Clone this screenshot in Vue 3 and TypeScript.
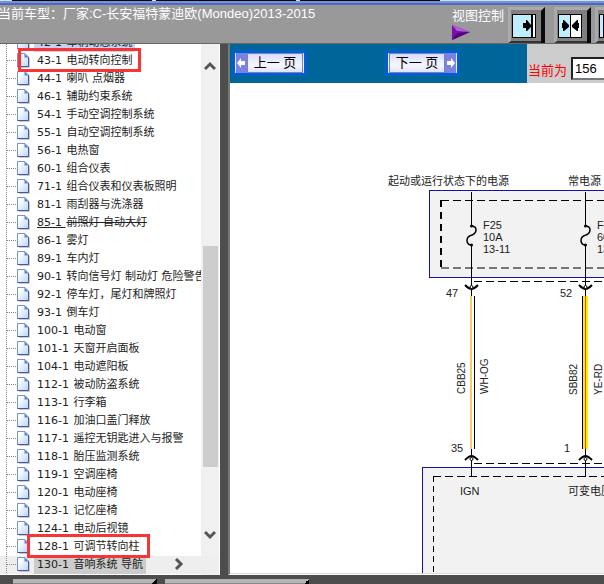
<script setup lang="ts">
import { ref } from 'vue'

interface TreeItem {
  code: string
  name: string
  state?: 'past' | 'marked' | 'struck' | 'current'
}

const items: TreeItem[] = [
  { code: '42-1', name: '车辆动态系统', state: 'past' },
  { code: '43-1', name: '电动转向控制', state: 'marked' },
  { code: '44-1', name: '喇叭 点烟器' },
  { code: '46-1', name: '辅助约束系统' },
  { code: '54-1', name: '手动空调控制系统' },
  { code: '55-1', name: '自动空调控制系统' },
  { code: '56-1', name: '电热窗' },
  { code: '60-1', name: '组合仪表' },
  { code: '71-1', name: '组合仪表和仪表板照明' },
  { code: '81-1', name: '雨刮器与洗涤器' },
  { code: '85-1', name: '前照灯 自动大灯', state: 'struck' },
  { code: '86-1', name: '雾灯' },
  { code: '89-1', name: '车内灯' },
  { code: '90-1', name: '转向信号灯 制动灯 危险警告灯' },
  { code: '92-1', name: '停车灯，尾灯和牌照灯' },
  { code: '93-1', name: '倒车灯' },
  { code: '100-1', name: '电动窗' },
  { code: '101-1', name: '天窗开启面板' },
  { code: '104-1', name: '电动遮阳板' },
  { code: '112-1', name: '被动防盗系统' },
  { code: '113-1', name: '行李箱' },
  { code: '116-1', name: '加油口盖门释放' },
  { code: '117-1', name: '遥控无钥匙进入与报警' },
  { code: '118-1', name: '胎压监测系统' },
  { code: '119-1', name: '空调座椅' },
  { code: '120-1', name: '电动座椅' },
  { code: '123-1', name: '记忆座椅' },
  { code: '124-1', name: '电动后视镜' },
  { code: '128-1', name: '可调节转向柱', state: 'marked' },
  { code: '130-1', name: '音响系统 导航', state: 'current' },
]

const page = ref('156')

// Horizontal positions of the two fused supply wires
const fuses = [
  { x: 471, lines: ['F25', '10A', '13-11'] },
  { x: 585, lines: ['F42', '60A', '13-11'] },
]
</script>

<template>
  <div class="app">
    <div class="strip"><i></i><i></i><i></i></div>
    <header class="header">
      <h1 class="title">当前车型：厂家:C-长安福特蒙迪欧(Mondeo)2013-2015</h1>
      <div class="views">
        <div class="view-label">
          <span>视图控制</span>
          <svg width="19" height="16" viewBox="0 0 19 16" aria-hidden="true">
            <path d="M0 0L18 7L0 15Z" fill="#7a10a8" />
            <path d="M0 0L18 7L5 6Z" fill="#b45be0" />
            <path d="M0 15L5 8L18 7Z" fill="#52007e" />
          </svg>
        </div>
        <div class="view-pair">
          <button class="view-btn" type="button" aria-label="展开目录">
            <svg width="37" height="36" viewBox="0 0 37 36">
              <path d="M0 0H37L33 3H3V36H0Z" fill="#aaa" />
              <path d="M37 0V36H33V4Z" fill="#0a0a0a" />
              <path d="M0 36L3 34H33V36Z" fill="#333" />
              <rect x="4.5" y="7.5" width="23" height="23" fill="#beeeff" stroke="#000" />
              <rect x="24" y="8" width="3" height="22" fill="#fff" />
              <path d="M24 8V30" stroke="#000" stroke-width="2" />
              <path d="M15 16H18V13H19L23 18V20L19 24H18V21H15Z" fill="#000" />
            </svg>
          </button>
          <button class="view-btn" type="button" aria-label="左右分栏">
            <svg width="37" height="36" viewBox="0 0 37 36">
              <path d="M0 0H37L33 3H3V36H0Z" fill="#aaa" />
              <path d="M37 0V36H33V4Z" fill="#0a0a0a" />
              <path d="M0 36L3 34H33V36Z" fill="#333" />
              <rect x="4.5" y="7.5" width="23" height="23" fill="#fff" stroke="#000" />
              <rect x="5" y="8" width="11" height="22" fill="#beeeff" />
              <path d="M16.5 8V30" stroke="#000" />
              <path d="M8 16H9V13H10L15 18V20L10 24H9V21H8ZM25 16H24V13H23L18 18V20L23 24H24V21H25Z" fill="#000" />
            </svg>
          </button>
        </div>
        <button class="view-btn" type="button" aria-label="收起目录">
          <svg width="37" height="36" viewBox="0 0 37 36">
            <path d="M0 0H37L33 3H3V36H0Z" fill="#aaa" />
            <path d="M37 0V36H33V4Z" fill="#0a0a0a" />
            <path d="M0 36L3 34H33V36Z" fill="#333" />
            <rect x="4.5" y="7.5" width="23" height="23" fill="#fff" stroke="#000" />
            <rect x="5" y="8" width="3" height="22" fill="#beeeff" />
            <path d="M8.5 8V30" stroke="#000" />
          </svg>
        </button>
      </div>
    </header>

    <div class="body">
      <nav class="side">
        <ul class="tree">
          <li v-for="item in items" :key="item.code" class="node" :class="item.state">
            <svg class="doc" width="13" height="15" viewBox="0 0 13 15" aria-hidden="true">
              <defs>
                <linearGradient id="sheet" x1="0" y1="0" x2="1" y2="1">
                  <stop offset="0.2" stop-color="#fff" />
                  <stop offset="1" stop-color="#b9d4fa" />
                </linearGradient>
              </defs>
              <path d="M2 14.5H12.5V5" fill="none" stroke="#c9c9d2" />
              <path d="M.5 .5H8L11.5 4V13.5H.5Z" fill="url(#sheet)" stroke="#7394cf" />
              <path d="M11.5 4V13.5H.5" fill="none" stroke="#4c5596" />
              <path d="M7.5 .5L11.5 4.5H7.5Z" fill="#5c82cc" />
            </svg>
            <a class="link" href="#"><span class="code">{{ item.code }}&nbsp;</span><span class="name">{{ item.name }}</span></a>
          </li>
        </ul>
        <div class="scroll">
          <svg width="12" height="10" viewBox="0 0 12 10"><path d="M1 8L6 3L11 8" /></svg>
          <div class="track"><div class="thumb"></div></div>
          <svg width="12" height="10" viewBox="0 0 12 10"><path d="M1 2L6 7L11 2" /></svg>
        </div>
        <svg class="chev" width="10" height="12" viewBox="0 0 10 12"><path d="M2 1L7 6L2 11" /></svg>
      </nav>

      <main class="main">
        <div class="bar">
          <button class="pager" type="button">
            <span class="arrow">
              <svg width="11" height="18" viewBox="0 0 11 18"><path d="M1 9L5 4V7H9V11H5V14Z" fill="#fff" /></svg>
            </span>
            <span class="word">上一 页</span>
          </button>
          <button class="pager next" type="button">
            <span class="word">下一 页</span>
            <span class="arrow">
              <svg width="11" height="18" viewBox="0 0 11 18"><path d="M10 9L6 4V7H2V11H6V14Z" fill="#fff" /></svg>
            </span>
          </button>
          <div class="goto">
            <label for="page">当前为</label>
            <input id="page" v-model="page" type="text" />
          </div>
        </div>
        <div class="sheet">
          <svg class="diagram" width="700" height="600" viewBox="230 83 700 600">
            <g>
              <text x="388" y="185">起动或运行状态下的电源</text>
              <text x="568" y="185">常电源</text>
            </g>
            <rect x="429.5" y="190.5" width="400" height="87" fill="#f2f2f2" stroke="#1414a0" />
            <path d="M441 200.5H830" stroke="#000" stroke-dasharray="8 4" />
            <path d="M441 200V269" stroke="#000" stroke-width="2" stroke-dasharray="7 5" />
            <path d="M441 268H830" stroke="#777" stroke-width="2" stroke-dasharray="8 4" />
            <path d="M474 281.5H830" stroke="#000" stroke-dasharray="8 4" />

            <g v-for="fuse in fuses" :key="fuse.x">
              <path :d="`M${fuse.x + 0.5} 192V226M${fuse.x + 0.5} 245V296`" stroke="#000" />
              <path
                :d="`M${fuse.x} 226C${fuse.x + 7} 226 ${fuse.x + 6} 233 ${fuse.x + 1} 235C${fuse.x - 6} 237 ${fuse.x - 5} 244 ${fuse.x} 245`"
                fill="none" stroke="#000" stroke-width="1.5"
              />
              <circle :cx="fuse.x + 0.5" cy="226" r="1.5" />
              <circle :cx="fuse.x + 0.5" cy="245" r="1.5" />
              <path
                :d="`M${fuse.x - 6} 285Q${fuse.x - 2} 289 ${fuse.x + 0.5} 289Q${fuse.x + 3} 289 ${fuse.x + 7} 285`"
                fill="none" stroke="#000" stroke-width="2"
              />
              <circle :cx="fuse.x + 0.5" cy="287" r="1.5" fill="#fff" stroke="#000" />
              <text v-for="(line, i) in fuse.lines" :key="i" :x="fuse.x + 12" :y="229 + i * 12">{{ line }}</text>
            </g>
            <text x="446" y="297">47</text>
            <text x="560" y="297">52</text>

            <path d="M471 296V449" stroke="#f5cc68" stroke-width="2" />
            <path d="M474.5 296V449" stroke="#000" />
            <rect x="583" y="296" width="5" height="153" fill="#ffee00" />
            <path d="M582.5 296V449" stroke="#000" />
            <path d="M585.5 296V449" stroke="#e04a10" />

            <g class="wire">
              <text transform="translate(465 394) rotate(-90)">CBB25</text>
              <text transform="translate(488 394) rotate(-90)">WH-OG</text>
              <text transform="translate(577 395) rotate(-90)">SBB82</text>
              <text transform="translate(602 395) rotate(-90)">YE-RD</text>
            </g>
            <text x="451" y="452">35</text>
            <text x="564" y="452">1</text>

            <path d="M474 463.5H830" stroke="#000" stroke-dasharray="8 4" />
            <rect x="422.5" y="467.5" width="420" height="220" fill="#f2f2f2" stroke="#1414a0" />
            <path d="M433 476.5H830" stroke="#000" stroke-dasharray="8 4" />
            <path d="M433.5 476V690" stroke="#000" stroke-dasharray="6 4" />
            <g v-for="fuse in fuses" :key="fuse.x">
              <path :d="`M${fuse.x + 0.5} 449V477`" stroke="#000" />
              <path
                :d="`M${fuse.x - 6} 460Q${fuse.x - 2} 456 ${fuse.x + 0.5} 456Q${fuse.x + 3} 456 ${fuse.x + 7} 460`"
                fill="none" stroke="#000" stroke-width="2"
              />
              <circle :cx="fuse.x + 0.5" cy="459" r="1.5" fill="#fff" stroke="#000" />
            </g>
            <text x="460" y="495">IGN</text>
            <text x="568" y="495">可变电压</text>
          </svg>
        </div>
      </main>
    </div>
    <footer class="foot"><div></div><div></div></footer>
  </div>
</template>

<style>
html,
body,
#app {
  height: 100%;
  margin: 0;
}
</style>

<style scoped>
.app {
  display: flex;
  flex-direction: column;
  height: 100%;
  overflow: hidden;
  background: #4d4d4d;
  font-family: 'Liberation Sans', 'Noto Sans CJK SC', sans-serif;
}
.strip {
  display: flex;
  gap: 4px;
  flex: none;
  height: 5px;
  padding-left: 12px;
  background: linear-gradient(#ddd 0 1px, #7393dc 1px 3px, #4a6cc0 3px);
}
.strip i {
  width: 140px;
  height: 1px;
  background: #000;
}
.header {
  display: flex;
  justify-content: space-between;
  flex: none;
  box-sizing: border-box;
  height: 39px;
  border-bottom: 1px solid #666;
  background: #999;
  color: #fff;
}
.title {
  margin: 0 0 0 -2px;
  font-size: 13px;
  font-weight: 400;
  line-height: 18px;
  white-space: nowrap;
}
.views {
  display: flex;
  align-items: flex-start;
  gap: 4px;
  flex: none;
  margin-right: -28px;
  padding-top: 2px;
}
.view-label {
  display: flex;
  flex-direction: column;
  font-size: 13px;
  line-height: 18px;
}
.view-pair {
  display: flex;
  gap: 9px;
}
.view-btn {
  width: 37px;
  height: 36px;
  padding: 0;
  border: 0;
  background: #808080;
}
.view-btn svg {
  display: block;
}
.body {
  display: flex;
  flex: 1;
  min-height: 0;
  gap: 8px;
}
.side {
  position: relative;
  display: flex;
  flex: none;
  width: 220px;
  overflow: hidden;
  background: #fff;
}
.tree {
  flex: 1;
  min-width: 0;
  height: 100%;
  margin: -10px 0 0;
  padding: 0;
  list-style: none;
}
.node {
  position: relative;
  display: flex;
  align-items: flex-start;
  height: 18px;
  gap: 4px;
  padding-left: 17px;
  background:
    repeating-linear-gradient(90deg, #888 0 1px, transparent 1px 2px) 7px 8px / 10px 1px no-repeat,
    repeating-linear-gradient(#888 0 1px, transparent 1px 2px) 6px 0 / 1px 18px no-repeat;
}
.doc {
  flex: none;
  margin-top: 1px;
}
.link {
  overflow: hidden;
  height: 18px;
  padding: 0 3px;
  color: #222;
  font: 11px/18px 'DejaVu Sans', 'Noto Sans CJK SC', sans-serif;
  text-decoration: none;
  white-space: nowrap;
}
.code {
  padding-right: 1px;
}
.past .link {
  background: #c5d3ee;
}
.struck .code {
  text-decoration: underline;
}
.struck .name {
  text-decoration: line-through;
}
.marked {
  z-index: 1;
}
.marked::after {
  position: absolute;
  top: -4px;
  left: 18px;
  box-sizing: border-box;
  width: 123px;
  height: 24px;
  border: 3px solid #f83434;
  content: '';
}
.marked:nth-last-child(2)::after {
  left: 27px;
}
.current {
  width: 202px;
  background-color: #eee;
}
.current .link {
  background: #ccc;
}
.scroll {
  display: flex;
  flex-direction: column;
  align-items: center;
  flex: none;
  width: 18px;
  padding: 17px 0 35px;
  margin-right: 1px;
  background: #f0f0f0;
}
.scroll path,
.chev path {
  fill: none;
  stroke: #555;
  stroke-width: 3;
}
.track {
  flex: 1;
  width: 15px;
  padding: 175px 0 63px;
}
.thumb {
  height: 100%;
  background: #cdcdcd;
}
.chev {
  position: absolute;
  bottom: 5px;
  left: 174px;
}
.main {
  display: flex;
  flex: 1;
  flex-direction: column;
  min-width: 0;
  border-left: 2px solid #777;
  border-bottom: 1px solid #fff;
}
.bar {
  display: flex;
  align-items: flex-start;
  flex: none;
  height: 39px;
  padding-left: 2px;
  background: #006699;
}
.pager {
  display: flex;
  box-sizing: border-box;
  flex: none;
  width: 75px;
  height: 26px;
  margin-top: 6px;
  padding: 0 1px;
  border: 3px solid #0060d0;
  background: linear-gradient(#d5dafa, #f5f7ff 60%, #dde0fb);
  color: #000;
  font: 13px/20px 'Liberation Sans', 'Noto Sans CJK SC', sans-serif;
}
.pager.next {
  margin-left: 78px;
}
.word {
  flex: 1;
  border: 1px solid #8080b8;
  line-height: 18px;
  text-align: center;
  white-space: nowrap;
}
.arrow {
  display: flex;
  align-items: center;
  width: 11px;
  height: 20px;
  background: #7a82e6;
}
.goto {
  display: flex;
  align-items: flex-end;
  gap: 4px;
  flex: 1;
  box-sizing: border-box;
  height: 39px;
  margin-left: 67px;
  padding: 0 0 3px 1px;
  overflow: hidden;
  background: #ccc;
}
.goto label {
  flex: none;
  color: #f00;
  font-size: 13px;
  line-height: 19px;
}
.goto input {
  box-sizing: border-box;
  flex: none;
  width: 60px;
  height: 23px;
  padding: 0 2px;
  border: 2px inset #777;
  background: #fff;
  font: 13px 'Liberation Sans', sans-serif;
}
.sheet {
  flex: 1;
  min-height: 0;
  overflow: hidden;
  border-bottom: 1px solid #ddd;
  background: #fff;
}
.diagram {
  display: block;
  font-size: 11px;
}
.diagram text {
  fill: #222;
}
.wire {
  font-size: 10px;
}
.foot {
  display: flex;
  gap: 8px;
  flex: none;
  height: 5px;
  padding: 4px 0 0 13px;
}
.foot div {
  width: 144px;
  height: 5px;
  background:
    linear-gradient(135deg, transparent 50%, #000 50%) 100% 0 / 5px 5px no-repeat,
    linear-gradient(#b5b3b5 0 4px, #888 4px);
}
</style>
